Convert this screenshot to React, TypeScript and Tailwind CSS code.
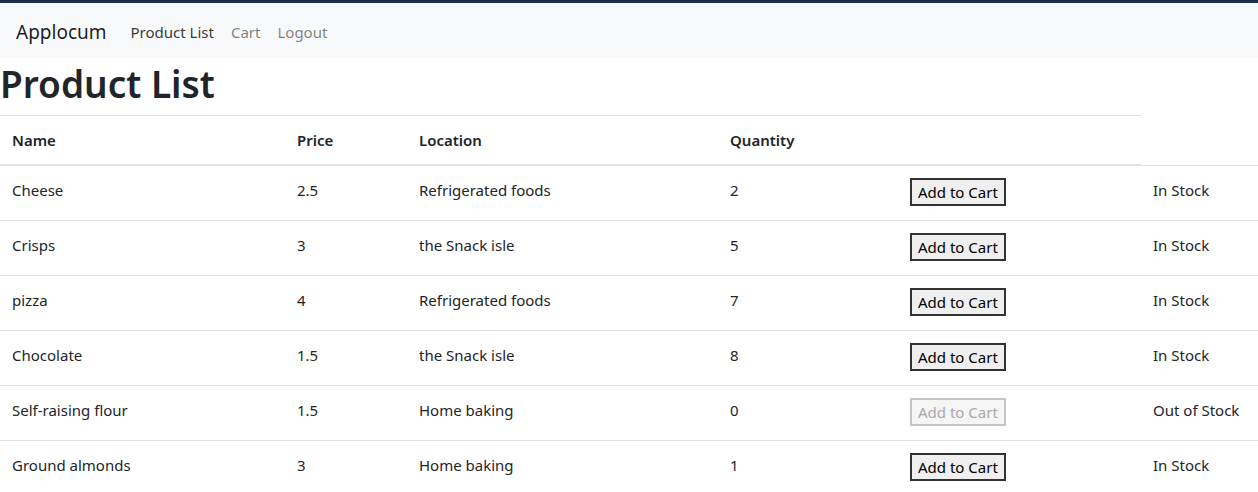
const products = [
  { name: 'Cheese', price: '2.5', location: 'Refrigerated foods', qty: 2 },
  { name: 'Crisps', price: '3', location: 'the Snack isle', qty: 5 },
  { name: 'pizza', price: '4', location: 'Refrigerated foods', qty: 7 },
  { name: 'Chocolate', price: '1.5', location: 'the Snack isle', qty: 8 },
  { name: 'Self-raising flour', price: '1.5', location: 'Home baking', qty: 0 },
  { name: 'Ground almonds', price: '3', location: 'Home baking', qty: 1 },
];

export default function App() {
  return (
    <div
      className="min-h-screen bg-white text-[#212529]"
      style={{ fontFamily: '"Segoe UI", "Noto Sans", "Open Sans", sans-serif' }}
    >
      <div className="h-[3px] bg-[#1c2e4a]" />
      <nav className="flex h-[55px] items-center bg-[#f8f9fa] px-4 pt-[4px]">
        <span className="mr-[24px] text-[19px] text-black/90">Applocum</span>
        <ul className="flex items-center text-[15px]">
          <li className="pr-[17px] text-black/80">Product List</li>
          <li className="pr-[17px] text-black/50">Cart</li>
          <li className="text-black/50">Logout</li>
        </ul>
      </nav>
      <h1 className="mb-[8px] pt-[3px] text-[37px] leading-[46px] font-semibold">Product List</h1>
      <table className="w-full table-fixed border-collapse text-[15px]">
        <colgroup>
          <col className="w-[285px]" />
          <col className="w-[122px]" />
          <col className="w-[311px]" />
          <col className="w-[180px]" />
          <col className="w-[243px]" />
          <col className="w-[117px]" />
        </colgroup>
        <thead>
          <tr>
            {['Name', 'Price', 'Location', 'Quantity', ''].map((h, i) => (
              <th
                key={i}
                className="border-t border-b-2 border-[#dee2e6] p-3 text-left align-bottom leading-[24px] font-semibold"
              >
                {h}
              </th>
            ))}
          </tr>
        </thead>
        <tbody>
          {products.map((p) => {
            const inStock = p.qty > 0;
            return (
              <tr key={p.name} className="border-t border-[#dee2e6]">
                <td className="h-[55px] p-3 align-top leading-[24px]">{p.name}</td>
                <td className="p-3 align-top leading-[24px]">{p.price}</td>
                <td className="p-3 align-top leading-[24px]">{p.location}</td>
                <td className="p-3 align-top leading-[24px]">{p.qty}</td>
                <td className="p-3 align-top">
                  <button
                    type="button"
                    disabled={!inStock}
                    className={
                      inStock
                        ? 'border-2 border-[#333] bg-[#efefef] px-1.5 text-[15px] leading-[24px] text-black'
                        : 'border-2 border-[#c4c4c4] bg-[#f5f5f5] px-1.5 text-[15px] leading-[24px] text-[#a9a9a9]'
                    }
                  >
                    Add to Cart
                  </button>
                </td>
                <td className="p-3 pr-0 align-top leading-[24px] whitespace-nowrap">
                  {inStock ? 'In Stock' : 'Out of Stock'}
                </td>
              </tr>
            );
          })}
        </tbody>
      </table>
    </div>
  );
}
